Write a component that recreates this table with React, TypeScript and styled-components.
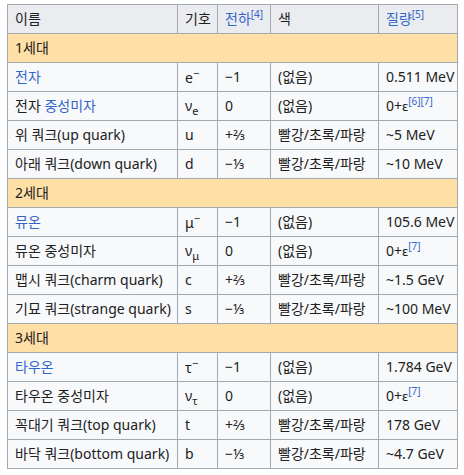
import type { ReactNode } from "react";
import styled, { createGlobalStyle } from "styled-components";

const GlobalStyle = createGlobalStyle`
  body {
    margin: 0;
    background: #fff;
    font-family: "Noto Sans", "Noto Sans CJK KR", sans-serif;
    color: #202122;
  }
`;

const Page = styled.div`
  padding: 4px 0 0 7px;
`;

const Table = styled.table`
  border-collapse: collapse;
  table-layout: fixed;
  width: 451px;
  font-size: 14px;
  background: #f8f9fa;
`;

const Td = styled.td`
  border: 1px solid #a2a9b1;
  height: 28px;
  padding: 0 7px;
  line-height: 20px;
  white-space: nowrap;
  overflow: hidden;
  vertical-align: middle;
`;

const Th = styled(Td).attrs({ as: "th" })`
  font-weight: normal;
  text-align: left;
  background: #eaecf0;
`;

const GenTd = styled(Td)`
  background: #fedfa6;
`;

const Link = styled.span`
  color: #3366cc;
`;

const Sup = styled.sup`
  font-size: 10px;
  line-height: 1;
  color: #3366cc;
  vertical-align: 6px;
`;

const SupSym = styled.sup`
  font-size: 11px;
  line-height: 1;
  vertical-align: 6px;
`;

const Sub = styled.sub`
  font-size: 11px;
  line-height: 1;
  vertical-align: -4px;
`;

const SmallEps = styled.span`
  font-size: 13px;
`;

interface IParticle {
  name: ReactNode;
  symbol: ReactNode;
  charge: string;
  color: string;
  mass: ReactNode;
}

interface IGeneration {
  title: string;
  particles: IParticle[];
}

const Ref = ({ n }: { n: number[] }) => (
  <Sup>
    {n.map((x) => (
      <span key={x}>[{x}]</span>
    ))}
  </Sup>
);

const Eps = ({ refs }: { refs: number[] }) => (
  <>
    0+<SmallEps>ε</SmallEps>
    <Ref n={refs} />
  </>
);

const GENERATIONS: IGeneration[] = [
  {
    title: "1세대",
    particles: [
      { name: <Link>전자</Link>, symbol: <>e<SupSym>−</SupSym></>, charge: "−1", color: "(없음)", mass: "0.511 MeV" },
      { name: <>전자 <Link>중성미자</Link></>, symbol: <>ν<Sub>e</Sub></>, charge: "0", color: "(없음)", mass: <Eps refs={[6, 7]} /> },
      { name: "위 쿼크(up quark)", symbol: "u", charge: "+⅔", color: "빨강/초록/파랑", mass: "~5 MeV" },
      { name: "아래 쿼크(down quark)", symbol: "d", charge: "−⅓", color: "빨강/초록/파랑", mass: "~10 MeV" },
    ],
  },
  {
    title: "2세대",
    particles: [
      { name: <Link>뮤온</Link>, symbol: <>μ<SupSym>−</SupSym></>, charge: "−1", color: "(없음)", mass: "105.6 MeV" },
      { name: "뮤온 중성미자", symbol: <>ν<Sub>μ</Sub></>, charge: "0", color: "(없음)", mass: <Eps refs={[7]} /> },
      { name: "맵시 쿼크(charm quark)", symbol: "c", charge: "+⅔", color: "빨강/초록/파랑", mass: "~1.5 GeV" },
      { name: "기묘 쿼크(strange quark)", symbol: "s", charge: "−⅓", color: "빨강/초록/파랑", mass: "~100 MeV" },
    ],
  },
  {
    title: "3세대",
    particles: [
      { name: <Link>타우온</Link>, symbol: <>τ<SupSym>−</SupSym></>, charge: "−1", color: "(없음)", mass: "1.784 GeV" },
      { name: "타우온 중성미자", symbol: <>ν<Sub>τ</Sub></>, charge: "0", color: "(없음)", mass: <Eps refs={[7]} /> },
      { name: "꼭대기 쿼크(top quark)", symbol: "t", charge: "+⅔", color: "빨강/초록/파랑", mass: "178 GeV" },
      { name: "바닥 쿼크(bottom quark)", symbol: "b", charge: "−⅓", color: "빨강/초록/파랑", mass: "~4.7 GeV" },
    ],
  },
];

const GenBlock = ({ gen }: { gen: IGeneration }) => (
  <>
    <tr>
      <GenTd colSpan={5}>{gen.title}</GenTd>
    </tr>
    {gen.particles.map((p, i) => (
      <tr key={i}>
        <Td>{p.name}</Td>
        <Td>{p.symbol}</Td>
        <Td>{p.charge}</Td>
        <Td>{p.color}</Td>
        <Td>{p.mass}</Td>
      </tr>
    ))}
  </>
);

export default function App() {
  return (
    <Page>
      <GlobalStyle />
      <Table>
        <colgroup>
          <col style={{ width: 170 }} />
          <col style={{ width: 40 }} />
          <col style={{ width: 53 }} />
          <col style={{ width: 108 }} />
          <col style={{ width: 79 }} />
        </colgroup>
        <thead>
          <tr>
            <Th>이름</Th>
            <Th>기호</Th>
            <Th>
              <Link>전하</Link>
              <Ref n={[4]} />
            </Th>
            <Th>색</Th>
            <Th>
              <Link>질량</Link>
              <Ref n={[5]} />
            </Th>
          </tr>
        </thead>
        <tbody>
          {GENERATIONS.map((g) => (
            <GenBlock key={g.title} gen={g} />
          ))}
        </tbody>
      </Table>
    </Page>
  );
}
